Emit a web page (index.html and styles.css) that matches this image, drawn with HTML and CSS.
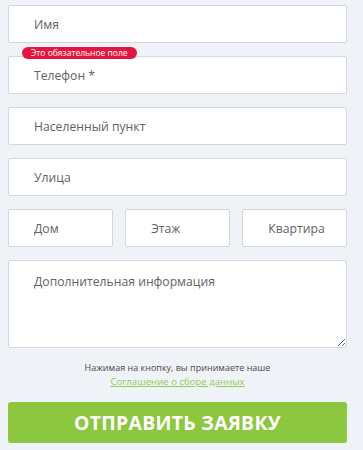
FILE: index.html
```html
<!DOCTYPE html>
<html lang="ru">
<head>
<meta charset="utf-8">
<title>Заявка</title>
<link rel="stylesheet" href="styles.css">
</head>
<body>
<form class="form">
  <input class="field" type="text" placeholder="Имя">
  <div class="field-wrap">
    <span class="badge">Это обязательное поле</span>
    <input class="field" type="text" placeholder="Телефон *">
  </div>
  <input class="field" type="text" placeholder="Населенный пункт">
  <input class="field" type="text" placeholder="Улица">
  <div class="row">
    <input class="field" type="text" placeholder="Дом">
    <input class="field" type="text" placeholder="Этаж">
    <input class="field" type="text" placeholder="Квартира">
  </div>
  <textarea class="field area" placeholder="Дополнительная информация"></textarea>
  <p class="note">Нажимая на кнопку, вы принимаете наше<br><a href="#" class="link">Соглашение о сборе данных</a></p>
  <button type="button" class="submit">ОТПРАВИТЬ ЗАЯВКУ</button>
</form>
</body>
</html>
```

FILE: styles.css
```css
html, body {
  margin: 0;
  padding: 0;
  background: #eff2f7;
}
body {
  font-family: "Open Sans", "Noto Sans", sans-serif;
  width: 363px;
  height: 450px;
  overflow: hidden;
}
.form {
  display: flex;
  flex-direction: column;
  gap: 13px;
  padding: 5px 16px 0 8px;
}
.field {
  box-sizing: border-box;
  display: block;
  width: 100%;
  height: 38px;
  margin: 0;
  padding: 0 0 0 25px;
  border: 1px solid #d3d6da;
  border-radius: 2px;
  background: #fff;
  font-family: inherit;
  font-size: 12.2px;
  color: #444;
  outline: none;
}
.field::placeholder {
  color: #626262;
  opacity: 1;
}
.field-wrap {
  position: relative;
}
.badge {
  position: absolute;
  left: 14px;
  top: -9px;
  height: 12px;
  line-height: 12px;
  padding: 0 9px;
  border-radius: 6px;
  background: #e3173e;
  color: #fff;
  font-size: 8.5px;
  white-space: nowrap;
}
.row {
  display: grid;
  grid-template-columns: 1fr 1fr 1fr;
  gap: 12.5px;
}
.area {
  height: 88px;
  padding: 12px 0 0 25px;
  resize: both;
  line-height: 18px;
}
.note {
  margin: 0;
  text-align: center;
  font-size: 9px;
  line-height: 14px;
  color: #4a4a4a;
}
.link {
  color: #97c95a;
  font-size: 9.6px;
  text-decoration: underline;
}
.submit {
  display: block;
  width: 100%;
  height: 41px;
  margin-top: 0;
  border: none;
  border-radius: 3px;
  background: #8dc63f;
  color: #fff;
  font-family: inherit;
  font-weight: 700;
  font-size: 19.4px;
  letter-spacing: 0.3px;
}
```
